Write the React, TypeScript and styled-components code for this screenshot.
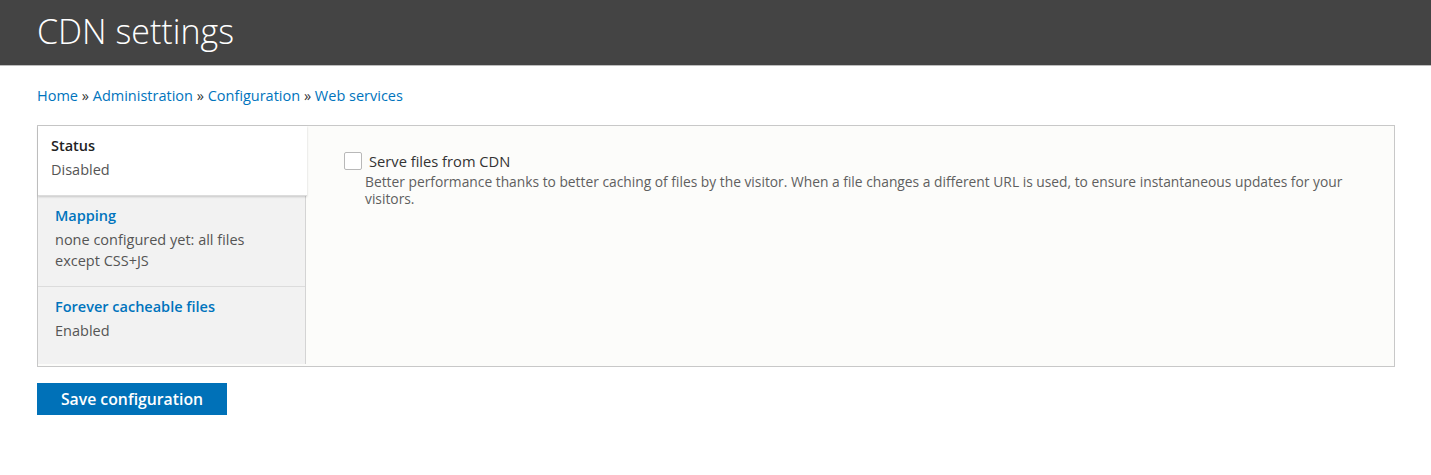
import styled, { createGlobalStyle } from 'styled-components';

type Tab = {
  title: string;
  summary: string;
  active?: boolean;
};

const tabs: Tab[] = [
  { title: 'Status', summary: 'Disabled', active: true },
  { title: 'Mapping', summary: 'none configured yet: all files except CSS+JS' },
  { title: 'Forever cacheable files', summary: 'Enabled' },
];

export default function App() {
  return (
    <>
      <GlobalStyle />
      <Header>
        <PageTitle>CDN settings</PageTitle>
      </Header>
      <Content>
        <Breadcrumb>
          <Crumb href="#">Home</Crumb> » <Crumb href="#">Administration</Crumb> »{' '}
          <Crumb href="#">Configuration</Crumb> » <Crumb href="#">Web services</Crumb>
        </Breadcrumb>

        <VerticalTabs>
          <TabMenu>
            {tabs.map((tab) => (
              <TabItem key={tab.title} $active={tab.active}>
                <TabTitle $active={tab.active}>{tab.title}</TabTitle>
                <TabSummary>{tab.summary}</TabSummary>
              </TabItem>
            ))}
          </TabMenu>
          <TabPane>
            <CheckRow>
              <Checkbox type="checkbox" id="cdn-status" />
              <CheckLabel htmlFor="cdn-status">Serve files from CDN</CheckLabel>
            </CheckRow>
            <Description>
              Better performance thanks to better caching of files by the visitor. When a file changes a
              different URL is used, to ensure instantaneous updates for your visitors.
            </Description>
          </TabPane>
        </VerticalTabs>

        <SaveButton type="button">Save configuration</SaveButton>
      </Content>
    </>
  );
}

const GlobalStyle = createGlobalStyle`
  body {
    margin: 0;
    background: #ffffff;
    font-family: "Open Sans", "Liberation Sans", sans-serif;
    color: #333;
  }
`;

const Header = styled.header`
  height: 65px;
  background: #444444;
  border-bottom: 1px solid #bdbdbd;
  padding: 0 37px;
  display: flex;
  align-items: center;
`;

const PageTitle = styled.h1`
  margin: 0;
  color: #ffffff;
  font-size: 34px;
  font-weight: 300;
  line-height: 1;
  padding-bottom: 4px;
`;

const Content = styled.main`
  padding: 19px 36px 0 37px;
`;

const Breadcrumb = styled.nav`
  font-size: 14.5px;
  line-height: 21px;
  color: #333;
`;

const Crumb = styled.a`
  color: #0074bd;
  text-decoration: none;
`;

const VerticalTabs = styled.div`
  margin-top: 19px;
  display: flex;
  height: 242px;
  box-sizing: border-box;
  border: 1px solid #c8c8c8;
  background: #fcfcfa;
`;

const TabMenu = styled.ul`
  list-style: none;
  margin: 0 0 2px;
  padding: 0;
  width: 268px;
  flex-shrink: 0;
  box-sizing: border-box;
  background: #f2f2f2;
  border-right: 1px solid #d4d4d4;
`;

const TabItem = styled.li<{ $active?: boolean }>`
  padding: 9px 14px 15px ${(p) => (p.$active ? '13px' : '17px')};
  border-bottom: 1px solid #dcdcdc;
  line-height: 21px;
  font-size: 14.5px;
  background: ${(p) => (p.$active ? '#ffffff' : 'transparent')};
  margin-right: ${(p) => (p.$active ? '-2px' : '0')};
  position: relative;
  z-index: ${(p) => (p.$active ? 1 : 0)};
  box-shadow: ${(p) => (p.$active ? '0 1px 2px rgba(0, 0, 0, 0.18)' : 'none')};

  &:last-child {
    border-bottom: none;
  }
`;

const TabTitle = styled.div<{ $active?: boolean }>`
  font-weight: 600;
  color: ${(p) => (p.$active ? '#222222' : '#0074bd')};
  margin-bottom: 3px;
`;

const TabSummary = styled.div`
  color: #555;
`;

const TabPane = styled.div`
  flex: 1;
  padding: 26px 44px 0 38px;
`;

const CheckRow = styled.div`
  display: flex;
  align-items: center;
  gap: 7px;
`;

const Checkbox = styled.input`
  appearance: none;
  margin: 0;
  width: 18px;
  height: 18px;
  box-sizing: border-box;
  border: 1px solid #b8b8b8;
  border-radius: 2px;
  background: #ffffff;
`;

const CheckLabel = styled.label`
  font-size: 14.7px;
  line-height: 18px;
  color: #333;
`;

const Description = styled.div`
  margin: 3px 0 0 21px;
  font-size: 13.8px;
  line-height: 17px;
  color: #5f5f5f;
`;

const SaveButton = styled.button`
  margin-top: 16px;
  width: 190px;
  height: 32px;
  border: none;
  border-radius: 0;
  background: #0071b8;
  color: #ffffff;
  font-family: "Open Sans", "Liberation Sans", sans-serif;
  font-size: 15.8px;
  font-weight: 600;
  cursor: pointer;
`;
